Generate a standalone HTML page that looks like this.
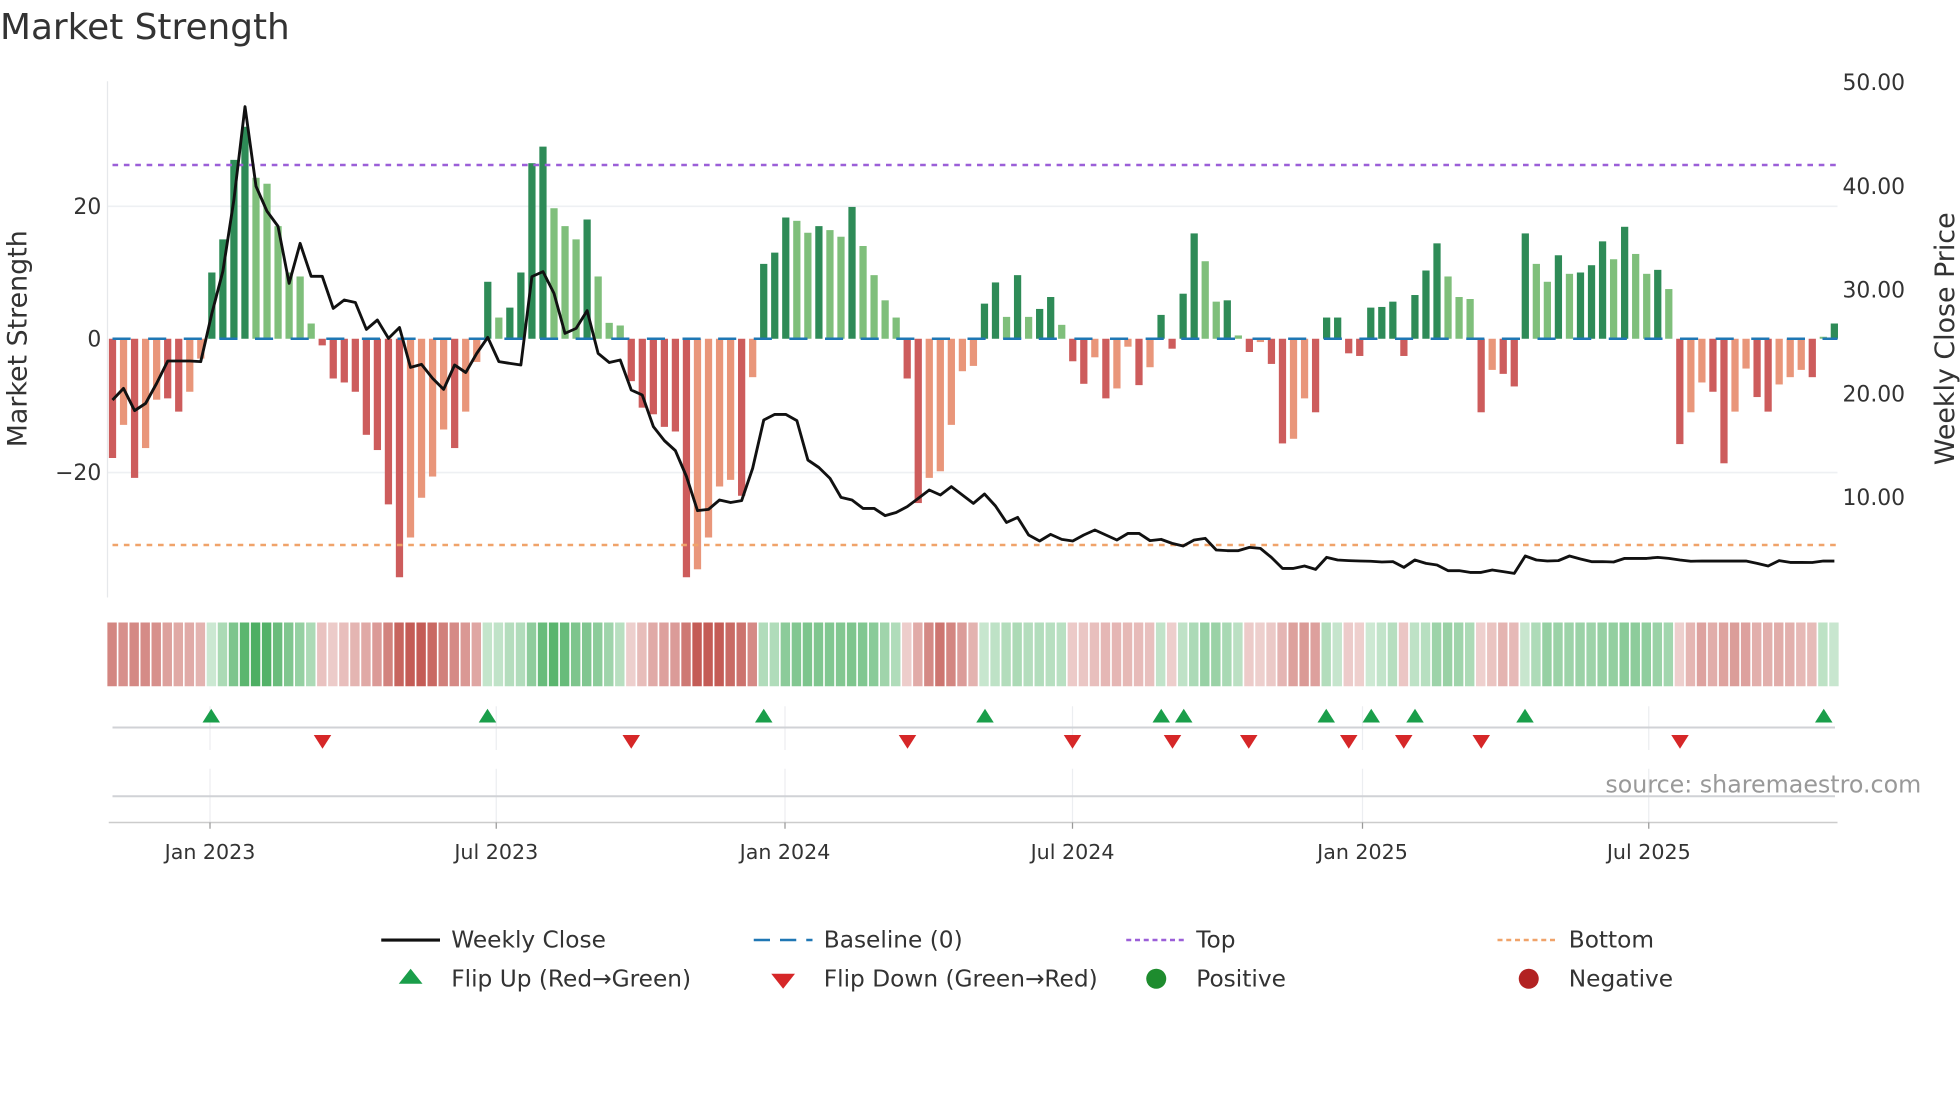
<!DOCTYPE html>
<html><head><meta charset="utf-8">
<style>
html,body{margin:0;padding:0;background:#fff;}
svg{display:block;}
text{font-family:"DejaVu Sans","Liberation Sans",sans-serif;fill:#333;}
</style></head>
<body>
<svg id="s" xmlns="http://www.w3.org/2000/svg" width="1960" height="1102" viewBox="0 0 1568 881.6">
<rect width="1568" height="881.6" fill="#fff"/>
<text x="0" y="31" font-size="28.7">Market Strength</text>
<line x1="86" y1="165" x2="1470" y2="165" stroke="#eef0f3" stroke-width="1.3"/>
<line x1="86" y1="378" x2="1470" y2="378" stroke="#eef0f3" stroke-width="1.3"/>
<line x1="86" y1="65" x2="86" y2="478" stroke="#e6e8eb" stroke-width="1"/>
<g id="bars"></g>
<line x1="90" y1="132" x2="1470" y2="132" stroke="#9b5fd8" stroke-width="2" stroke-dasharray="4.5 4.6"/>
<line x1="90" y1="436" x2="1470" y2="436" stroke="#f0a36a" stroke-width="2" stroke-dasharray="4.5 4.6"/>
<line x1="90" y1="271" x2="1470" y2="271" stroke="#1f77b4" stroke-width="2" stroke-dasharray="14.5 14"/>
<polyline id="price" fill="none" stroke="#111" stroke-width="2.3" stroke-linejoin="round"/>
<g font-size="17.5" text-anchor="end">
<text x="81" y="171">20</text><text x="81" y="277">0</text><text x="81" y="384">−20</text>
</g>
<g font-size="17.5">
<text x="1474" y="72">50.00</text><text x="1474" y="155">40.00</text><text x="1474" y="238">30.00</text><text x="1474" y="321">20.00</text><text x="1474" y="404">10.00</text>
</g>
<text transform="translate(21,271) rotate(-90)" font-size="21.5" text-anchor="middle">Market Strength</text>
<text transform="translate(1563,271) rotate(-90)" font-size="21.5" text-anchor="middle">Weekly Close Price</text>
<g id="heat"></g>
<g stroke="#eceef1" stroke-width="1">
<line x1="168" y1="565" x2="168" y2="600"/><line x1="397" y1="565" x2="397" y2="600"/><line x1="628" y1="565" x2="628" y2="600"/><line x1="858" y1="565" x2="858" y2="600"/><line x1="1090" y1="565" x2="1090" y2="600"/><line x1="1319" y1="565" x2="1319" y2="600"/>
<line x1="168" y1="615" x2="168" y2="658"/><line x1="397" y1="615" x2="397" y2="658"/><line x1="628" y1="615" x2="628" y2="658"/><line x1="858" y1="615" x2="858" y2="658"/><line x1="1090" y1="615" x2="1090" y2="658"/><line x1="1319" y1="615" x2="1319" y2="658"/>
</g>
<line x1="90" y1="582" x2="1468" y2="582" stroke="#d0d2d6" stroke-width="1.6"/>
<line x1="90" y1="637" x2="1468" y2="637" stroke="#d0d2d6" stroke-width="1.6"/>
<g id="marks"></g>
<text x="1537" y="634" font-size="19" text-anchor="end" style="fill:#999">source: sharemaestro.com</text>
<line x1="87" y1="658" x2="1470" y2="658" stroke="#ccc" stroke-width="1.2"/>
<g stroke="#999" stroke-width="1">
<line x1="168" y1="658" x2="168" y2="663"/><line x1="397" y1="658" x2="397" y2="663"/><line x1="628" y1="658" x2="628" y2="663"/><line x1="858" y1="658" x2="858" y2="663"/><line x1="1090" y1="658" x2="1090" y2="663"/><line x1="1319" y1="658" x2="1319" y2="663"/>
</g>
<g font-size="16.5" text-anchor="middle">
<text x="168" y="687">Jan 2023</text><text x="397" y="687">Jul 2023</text><text x="628" y="687">Jan 2024</text><text x="858" y="687">Jul 2024</text><text x="1090" y="687">Jan 2025</text><text x="1319" y="687">Jul 2025</text>
</g>
<g font-size="18.6">
<line x1="305" y1="752" x2="352" y2="752" stroke="#111" stroke-width="2.5"/>
<text x="361" y="758">Weekly Close</text>
<line x1="603" y1="752" x2="650" y2="752" stroke="#1f77b4" stroke-width="2" stroke-dasharray="13 8"/>
<text x="659" y="758">Baseline (0)</text>
<line x1="901" y1="752" x2="947" y2="752" stroke="#9b5fd8" stroke-width="2" stroke-dasharray="4 3"/>
<text x="957" y="758">Top</text>
<line x1="1198" y1="752" x2="1245" y2="752" stroke="#f0a36a" stroke-width="2" stroke-dasharray="4 3"/>
<text x="1255" y="758">Bottom</text>
<polygon points="319,787 338,787 328.5,775" fill="#1a9e4a"/>
<text x="361" y="789">Flip Up (Red→Green)</text>
<polygon points="617,779 636,779 626.5,791" fill="#d62728"/>
<text x="659" y="789">Flip Down (Green→Red)</text>
<circle cx="925" cy="783" r="8" fill="#1e8c2e"/>
<text x="957" y="789">Positive</text>
<circle cx="1223" cy="783" r="8" fill="#b22222"/>
<text x="1255" y="789">Negative</text>
</g>
</svg>
<script>
var D="-18R -13O -21R -16.5O -9.2O -9R -11R -8O -3O 10D 15D 27D 32D 24.3L 23.4L 17L 10L 9.4L 2.3L -1R -6R -6.6R -8R -14.5R -16.8R -25R -36R -30O -24O -20.8O -13.7O -16.5R -11O -3.5O 8.6D 3.2L 4.7D 10D 26.5D 29D 19.7L 17L 15L 18D 9.4L 2.4L 2L -6.4R -10.4R -11.4R -13.3R -14R -36R -34.8O -30O -22.3O -21.3O -23.7R -5.8O 11.3D 13D 18.3D 17.8L 16L 17D 16.4L 15.4L 19.9D 14L 9.6L 5.8L 3.2L -6R -24.8R -21O -20O -13O -4.9O -4.1O 5.3D 8.5D 3.3L 9.6D 3.3L 4.5D 6.3D 2.1L -3.4R -6.8R -2.8O -9R -7.5O -1.2O -7R -4.3O 3.6D -1.5R 6.8D 15.9D 11.7L 5.6L 5.8D 0.5L -2R -0.5O -3.8R -15.8R -15.1O -9O -11.1R 3.2D 3.2D -2.2R -2.6R 4.7D 4.8D 5.6D -2.6R 6.6D 10.3D 14.4D 9.4L 6.3L 6L -11.1R -4.7O -5.3R -7.2R 15.9D 11.3L 8.6L 12.6D 9.8L 10D 11.1D 14.7D 12L 16.9D 12.8L 9.8L 10.4D 7.5L -15.9R -11.1O -6.6O -8R -18.8R -11O -4.5O -8.8R -11R -6.9O -5.8O -4.7O -5.8R 0.3L 2.3D".split(" ");
var P=[320,310.7,328.5,322.7,306.7,288.8,288.8,288.8,289.3,250.7,217,160,85.3,149,169,181,226.7,194.7,221,221,246.7,240,242,263.5,256,270.7,262,293.9,291.5,302.7,311.5,292,298,282.7,269.9,289.3,290.7,292,221.3,217.3,234.7,266.7,262.7,248.5,282.7,290,288,312,316,341.3,352.5,360.5,381.3,408.5,407.5,400,402,400.5,374.7,336,331.5,331.5,336.5,368,374,382.7,397.9,400,406.7,406.7,412.5,410,405.3,398.7,392,396,389.3,396,402.7,395.2,404.8,418,413.9,428,432.8,427.5,431.5,432.8,428,424,428,432,426.7,426.7,432.5,431.5,434.7,436.8,432,430.7,440,440.5,440.5,437.9,438.7,445.9,454.7,454.7,452.8,455.5,445.9,448,448.5,448.8,449,449.6,449.3,453.9,448,450.7,452,456.5,456.5,457.9,457.9,456,457.3,458.7,444.8,448,448.8,448.5,444.8,447.2,449.3,449.3,449.6,446.7,446.7,446.7,445.9,446.7,448,449,448.8,448.8,448.8,448.8,448.8,450.7,452.8,448.5,449.9,449.9,450,448.8,448.8];
var C={D:"#2e8b57",L:"#7fbf7b",R:"#cd5c5c",O:"#e9967a"};
var NS="http://www.w3.org/2000/svg";
function el(t,a,p){var e=document.createElementNS(NS,t);for(var k in a)e.setAttribute(k,a[k]);document.getElementById(p).appendChild(e);return e;}
var sp=8.83,x0=90,vals=[];
D.forEach(function(s,i){var v=parseFloat(s),c=s.slice(-1),cx=x0+i*sp;vals.push(v);
 var y=271-v*5.3;el("rect",{x:cx-2.9,y:Math.min(y,271),width:5.8,height:Math.abs(v*5.3),fill:C[c]},"bars");});
var pts=P.map(function(y,i){return (x0+i*sp).toFixed(1)+","+y;}).join(" ");
document.getElementById("price").setAttribute("points",pts);
function mix(a,b,t){return "rgb("+[0,1,2].map(function(k){return Math.round(255+(a[k]-255)*t)}).join(",")+")";}
vals.forEach(function(v,i){var a=0,n=0;for(var j=Math.max(0,i-2);j<=i;j++){a+=vals[j];n++;}a/=n;
 var t=Math.min(1,Math.abs(a)/28);t=0.28+0.72*t;
 var col=v>=0?mix([76,175,98],0,t):mix([196,92,86],0,t);
 el("rect",{x:x0+i*sp-4.1,y:498,width:sp-1.3,height:51,fill:col},"heat");});
[169,390,611,788,929,947,1061,1097,1132,1220,1459].forEach(function(x){el("polygon",{points:(x-7)+",578 "+(x+7)+",578 "+x+",567",fill:"#1a9e4a"},"marks");});
[258,505,726,858,938,999,1079,1123,1185,1344].forEach(function(x){el("polygon",{points:(x-7)+",588 "+(x+7)+",588 "+x+",599",fill:"#d62728"},"marks");});
</script>
</body></html>
